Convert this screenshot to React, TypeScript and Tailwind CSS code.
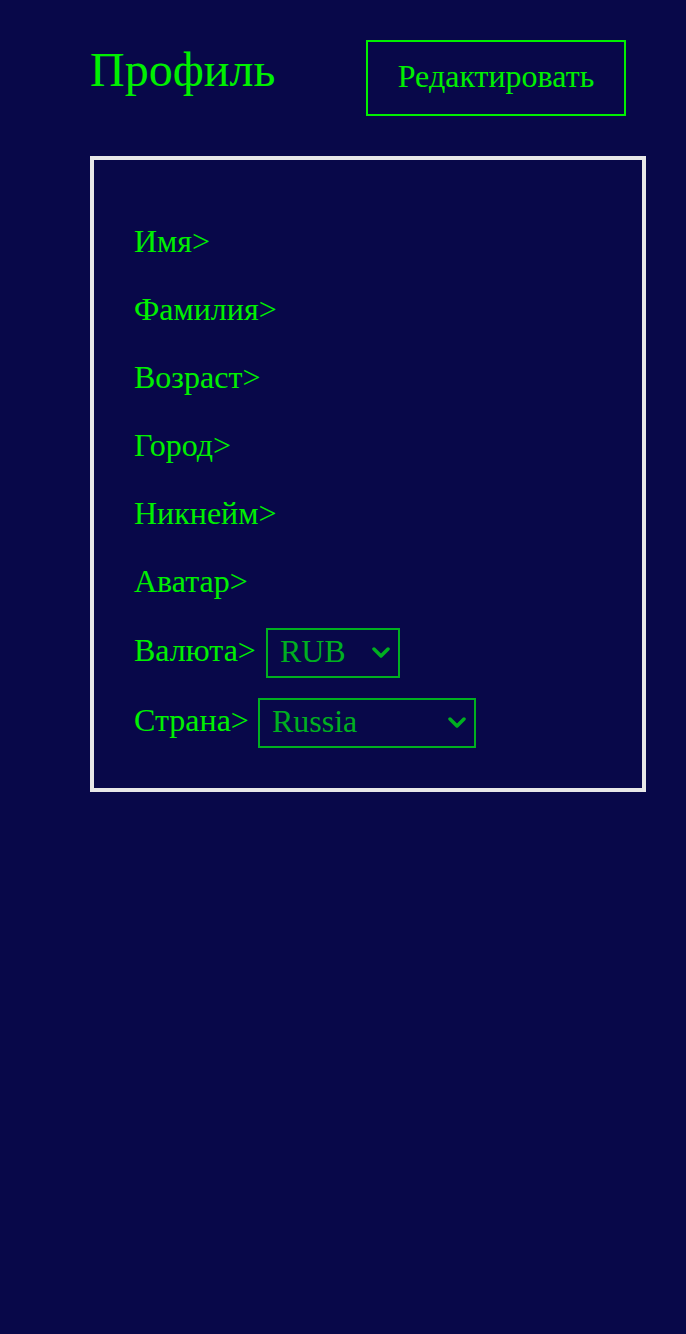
const FIELDS = ['Имя>', 'Фамилия>', 'Возраст>', 'Город>', 'Никнейм>', 'Аватар>']

function Chevron() {
  return (
    <svg width="18" height="12" viewBox="0 0 18 12" className="pointer-events-none absolute right-[10px] top-1/2 -translate-y-1/2">
      <path d="M2 2 L9 9 L16 2" fill="none" stroke="#00b020" strokeWidth="3.5" strokeLinecap="round" strokeLinejoin="round" />
    </svg>
  )
}

function Select({ value, options, width }: { value: string; options: string[]; width: string }) {
  return (
    <div className={`relative ${width}`}>
      <select
        defaultValue={value}
        className="h-[50px] w-full appearance-none border-2 border-[#00b020] bg-transparent pb-[7px] pl-[12px] pt-[3px] text-[32px] leading-[36px] text-[#00b020] outline-none"
      >
        {options.map((o) => (
          <option key={o} value={o} className="bg-[#080849]">
            {o}
          </option>
        ))}
      </select>
      <Chevron />
    </div>
  )
}

export default function App() {
  return (
    <div className="min-h-[1334px] w-full bg-[#080849] font-['Liberation_Serif',serif] text-[#00f000]">
      {/* Header */}
      <div className="flex items-start justify-between pl-[90px] pr-[60px] pt-[40px]">
        <h1 className="mt-[2px] text-[48px] leading-[55px]">Профиль</h1>
        <button className="h-[76px] w-[260px] border-2 border-[#00f000] pb-[4px] text-[32px]">
          Редактировать
        </button>
      </div>

      {/* Card */}
      <div className="ml-[90px] mt-[40px] w-[556px] border-4 border-[#e8e8e8] pb-[40px] pl-[40px] pt-[63px]">
        <div className="flex flex-col">
          {FIELDS.map((f, i) => (
            <p key={f} className={`h-[36px] text-[32px] leading-[36px] ${i === 5 ? 'mb-[29px]' : 'mb-[32px]'}`}>
              {f}
            </p>
          ))}

          <div className="flex items-center">
            <span className="mb-[6px] text-[32px] leading-[36px]">Валюта&gt;</span>
            <div className="ml-[10px]">
              <Select value="RUB" options={['RUB', 'USD', 'EUR']} width="w-[134px]" />
            </div>
          </div>

          <div className="mt-[20px] flex items-center">
            <span className="mb-[6px] text-[32px] leading-[36px]">Страна&gt;</span>
            <div className="ml-[9px]">
              <Select value="Russia" options={['Russia', 'Belarus', 'Kazakhstan']} width="w-[218px]" />
            </div>
          </div>
        </div>
      </div>
    </div>
  )
}
